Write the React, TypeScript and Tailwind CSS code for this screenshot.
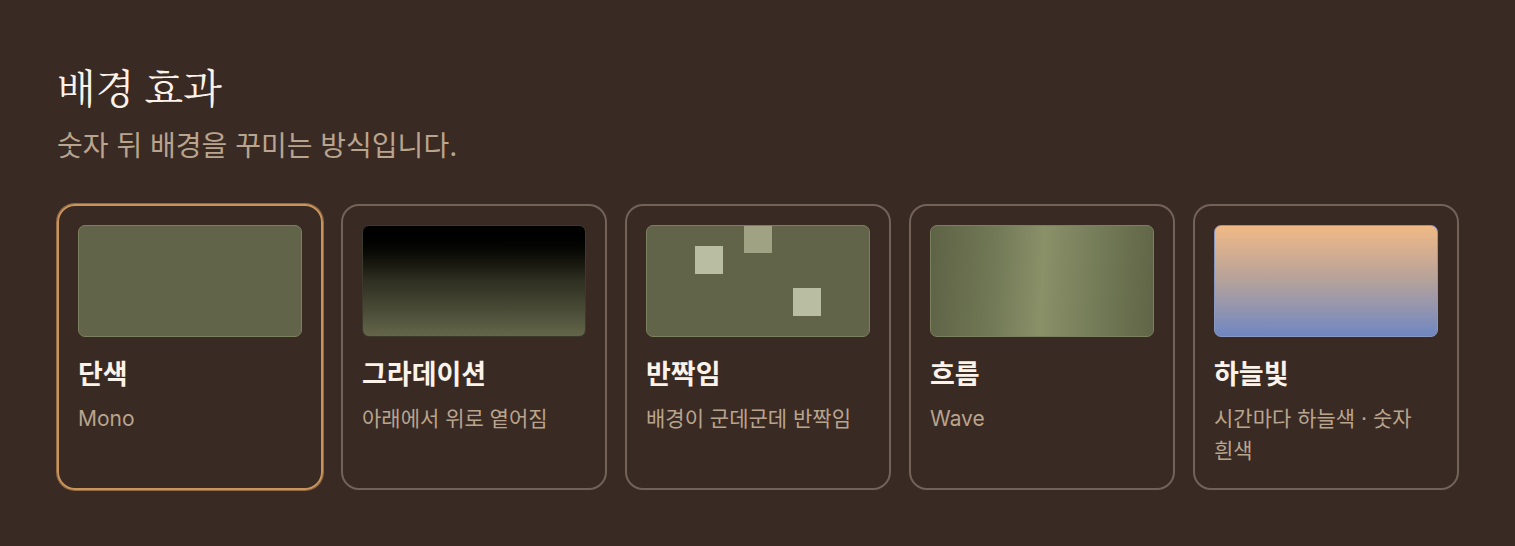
import React from 'react';

type Effect = {
  id: string;
  name: string;
  desc: string;
  preview: 'mono' | 'gradient' | 'sparkle' | 'wave' | 'sky';
};

const effects: Effect[] = [
  { id: 'mono', name: '단색', desc: 'Mono', preview: 'mono' },
  { id: 'gradient', name: '그라데이션', desc: '아래에서 위로 옅어짐', preview: 'gradient' },
  { id: 'sparkle', name: '반짝임', desc: '배경이 군데군데 반짝임', preview: 'sparkle' },
  { id: 'wave', name: '흐름', desc: 'Wave', preview: 'wave' },
  { id: 'sky', name: '하늘빛', desc: '시간마다 하늘색 · 숫자 흰색', preview: 'sky' },
];

function Preview({ kind }: { kind: Effect['preview'] }) {
  const base = 'relative h-[112px] w-full overflow-hidden rounded-[7px] border';
  if (kind === 'gradient') {
    return <div className={`${base} border-[#3c3a2c] bg-gradient-to-b from-[#000000] via-[#2f2f22] to-[#64664a]`} />;
  }
  if (kind === 'wave') {
    return (
      <div
        className={`${base} border-[#7b805f] bg-[linear-gradient(93deg,#5d6345_0%,#737a57_30%,#8a9068_50%,#767d59_72%,#5f6546_100%)]`}
      />
    );
  }
  if (kind === 'sky') {
    return <div className={`${base} border-[#8a97c0] bg-gradient-to-b from-[#f1b985] via-[#b4a19a] to-[#7086c1]`} />;
  }
  if (kind === 'sparkle') {
    return (
      <div className={`${base} border-[#7b805f] bg-[#626449]`}>
        <div className="absolute left-[48px] top-[20px] h-[28px] w-[28px] bg-[#b9bea2]" />
        <div className="absolute left-[97px] top-[-1px] h-[28px] w-[28px] bg-[#9fa283]" />
        <div className="absolute left-[146px] top-[62px] h-[28px] w-[28px] bg-[#b9bea2]" />
      </div>
    );
  }
  return <div className={`${base} border-[#7b805f] bg-[#626449]`} />;
}

export default function App() {
  const selected = 'mono';
  return (
    <div
      className="min-h-[546px] w-full bg-[#3a2a24] pl-[57px] pr-[56px] pt-[60px]"
      style={{ fontFamily: 'Inter, "Noto Sans CJK KR", sans-serif' }}
    >
      <h1
        className="text-[40px] leading-[52px] text-[#fbf3ea]"
        style={{ fontFamily: '"Noto Serif CJK KR", "Liberation Serif", "Noto Sans CJK KR", serif' }}
      >
        배경 효과
      </h1>
      <p className="mt-[16px] text-[28px] leading-[36px] text-[#b9a48e]">숫자 뒤 배경을 꾸미는 방식입니다.</p>

      <div className="mt-[40px] grid grid-cols-5 gap-[18px]">
        {effects.map((effect) => {
          const isSelected = effect.id === selected;
          return (
            <div
              key={effect.id}
              className={`h-[286px] rounded-[18px] border-2 px-[19px] pt-[19px] ${
                isSelected
                  ? 'border-[#c9955c] ring-1 ring-[#c9955c]/60'
                  : 'border-[#72625a]'
              }`}
            >
              <Preview kind={effect.preview} />
              <div className="mt-[20px] text-[27px] font-bold leading-[36px] text-[#fbf3ea]">{effect.name}</div>
              <div className="mt-[10px] break-keep text-[21px] leading-[32px] text-[#b9a48e]">{effect.desc}</div>
            </div>
          );
        })}
      </div>
    </div>
  );
}
